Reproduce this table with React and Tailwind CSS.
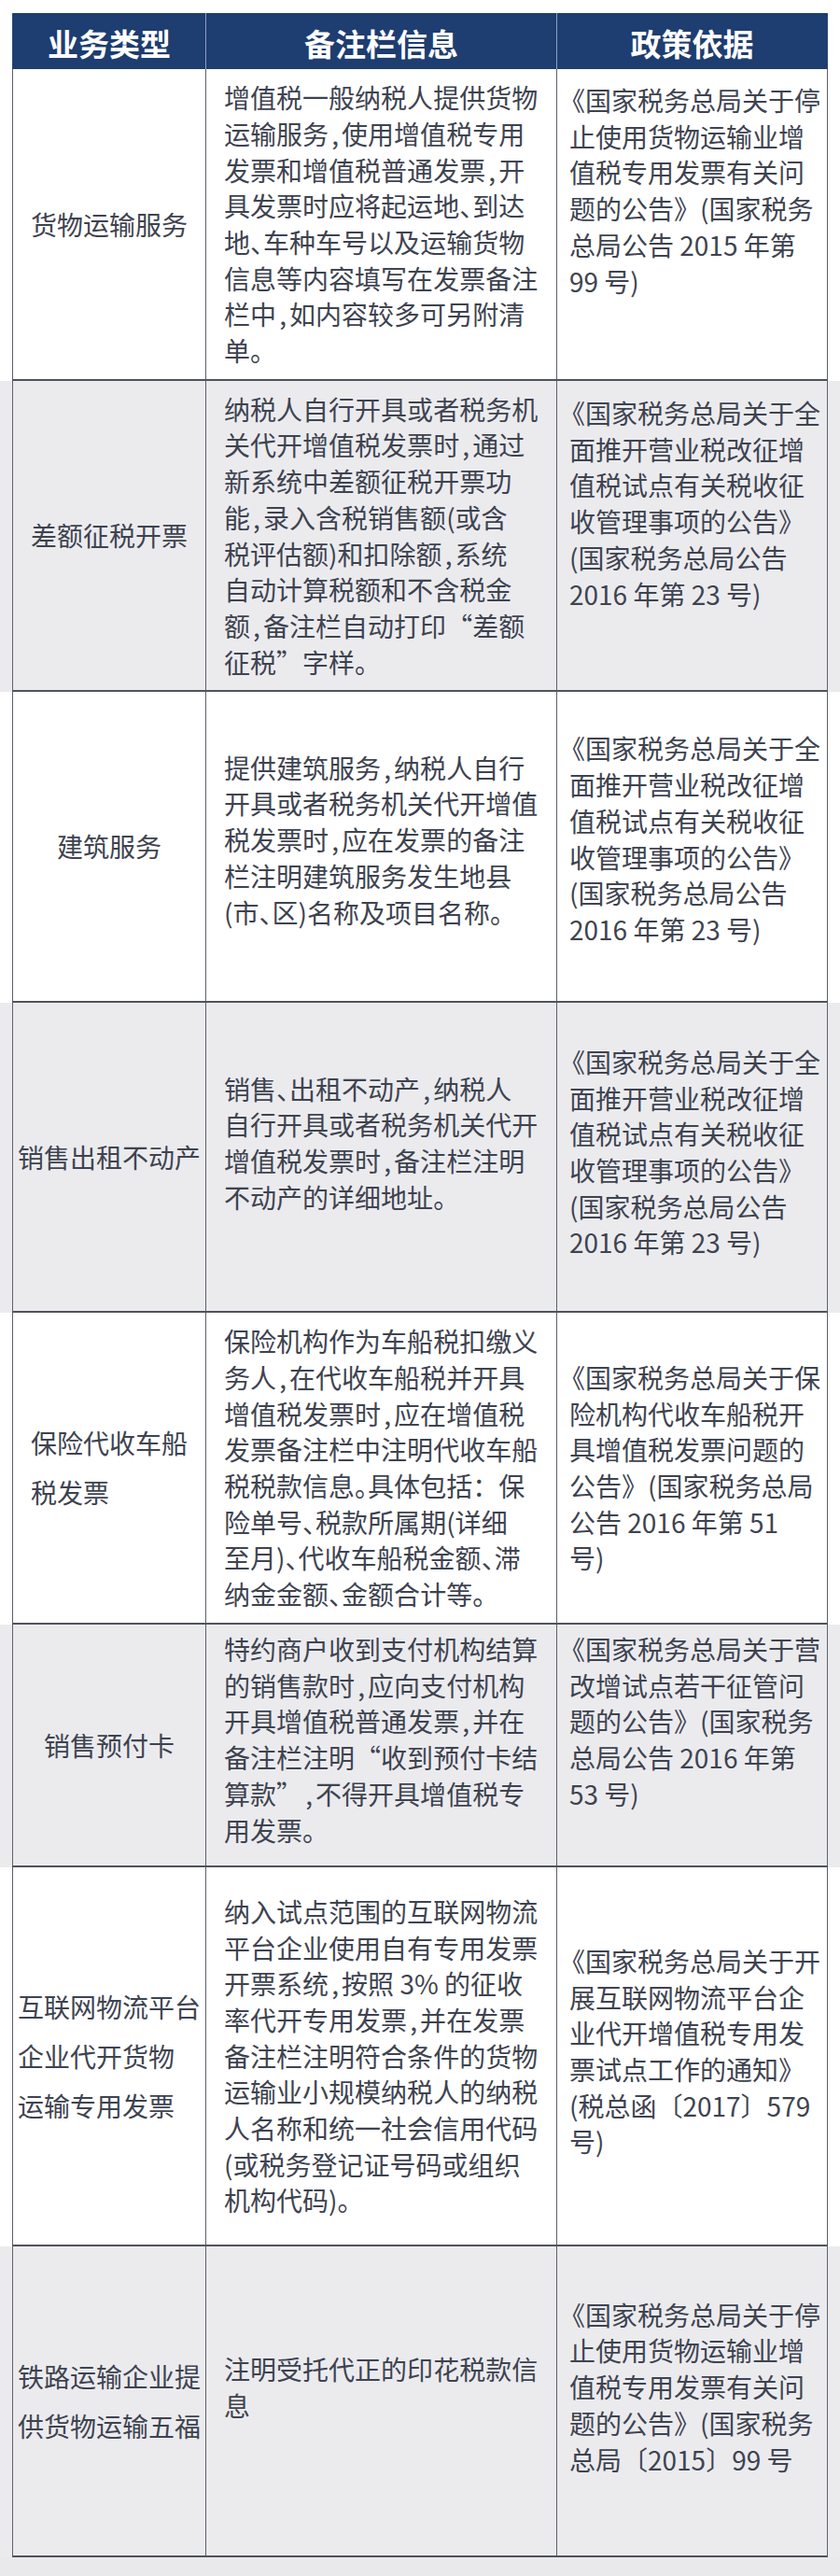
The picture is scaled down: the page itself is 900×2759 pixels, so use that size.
import React from "react";

const rows = [
  {
    bg: "bg-white",
    h: "h-[334px]",
    type: ["货物运输服务"],
    note: [
      "增值税一般纳税人提供货物",
      "运输服务，使用增值税专用",
      "发票和增值税普通发票，开",
      "具发票时应将起运地、到达",
      "地、车种车号以及运输货物",
      "信息等内容填写在发票备注",
      "栏中，如内容较多可另附清",
      "单。",
    ],
    law: [
      "《国家税务总局关于停",
      "止使用货物运输业增",
      "值税专用发票有关问",
      "题的公告》(国家税务",
      "总局公告 2015 年第",
      "99 号)",
    ],
    noteCls: "justify-center",
    lawCls: "justify-start pt-[14px]",
  },
  {
    bg: "bg-[#ebebee]",
    h: "h-[333px]",
    type: ["差额征税开票"],
    note: [
      "纳税人自行开具或者税务机",
      "关代开增值税发票时，通过",
      "新系统中差额征税开票功",
      "能，录入含税销售额(或含",
      "税评估额)和扣除额，系统",
      "自动计算税额和不含税金",
      "额，备注栏自动打印“差额",
      "征税”字样。",
    ],
    law: [
      "《国家税务总局关于全",
      "面推开营业税改征增",
      "值税试点有关税收征",
      "收管理事项的公告》",
      "(国家税务总局公告",
      "2016 年第 23 号)",
    ],
    noteCls: "justify-center",
    lawCls: "justify-start pt-[15px]",
  },
  {
    bg: "bg-white",
    h: "h-[333px]",
    type: ["建筑服务"],
    note: [
      "提供建筑服务，纳税人自行",
      "开具或者税务机关代开增值",
      "税发票时，应在发票的备注",
      "栏注明建筑服务发生地县",
      "(市、区)名称及项目名称。",
    ],
    law: [
      "《国家税务总局关于全",
      "面推开营业税改征增",
      "值税试点有关税收征",
      "收管理事项的公告》",
      "(国家税务总局公告",
      "2016 年第 23 号)",
    ],
    noteCls: "justify-center pb-[14px]",
    lawCls: "justify-center pb-[16px]",
  },
  {
    bg: "bg-[#ebebee]",
    h: "h-[332px]",
    type: ["销售出租不动产"],
    note: [
      "销售、出租不动产，纳税人",
      "自行开具或者税务机关代开",
      "增值税发票时，备注栏注明",
      "不动产的详细地址。",
    ],
    law: [
      "《国家税务总局关于全",
      "面推开营业税改征增",
      "值税试点有关税收征",
      "收管理事项的公告》",
      "(国家税务总局公告",
      "2016 年第 23 号)",
    ],
    noteCls: "justify-center pb-[30px]",
    lawCls: "justify-center pb-[10px]",
  },
  {
    bg: "bg-white",
    h: "h-[334px]",
    type: ["保险代收车船", "税发票"],
    note: [
      "保险机构作为车船税扣缴义",
      "务人，在代收车船税并开具",
      "增值税发票时，应在增值税",
      "发票备注栏中注明代收车船",
      "税税款信息。具体包括：保",
      "险单号、税款所属期(详细",
      "至月)、代收车船税金额、滞",
      "纳金金额、金额合计等。",
    ],
    law: [
      "《国家税务总局关于保",
      "险机构代收车船税开",
      "具增值税发票问题的",
      "公告》(国家税务总局",
      "公告 2016 年第 51",
      "号)",
    ],
    noteCls: "justify-center",
    lawCls: "justify-center",
  },
  {
    bg: "bg-[#ebebee]",
    h: "h-[260px]",
    type: ["销售预付卡"],
    note: [
      "特约商户收到支付机构结算",
      "的销售款时，应向支付机构",
      "开具增值税普通发票，并在",
      "备注栏注明“收到预付卡结",
      "算款”，不得开具增值税专",
      "用发票。",
    ],
    law: [
      "《国家税务总局关于营",
      "改增试点若干征管问",
      "题的公告》(国家税务",
      "总局公告 2016 年第",
      "53 号)",
    ],
    noteCls: "justify-start pt-[7px]",
    lawCls: "justify-start pt-[7px]",
  },
  {
    bg: "bg-white",
    h: "h-[406px]",
    type: ["互联网物流平台", "企业代开货物", "运输专用发票"],
    note: [
      "纳入试点范围的互联网物流",
      "平台企业使用自有专用发票",
      "开票系统，按照 3% 的征收",
      "率代开专用发票，并在发票",
      "备注栏注明符合条件的货物",
      "运输业小规模纳税人的纳税",
      "人名称和统一社会信用代码",
      "(或税务登记证号码或组织",
      "机构代码)。",
    ],
    law: [
      "《国家税务总局关于开",
      "展互联网物流平台企",
      "业代开增值税专用发",
      "票试点工作的通知》",
      "(税总函〔2017〕579",
      "号)",
    ],
    noteCls: "justify-center",
    lawCls: "justify-center pb-[10px]",
  },
  {
    bg: "bg-[#ebebee]",
    h: "h-[333px]",
    type: ["铁路运输企业提", "供货物运输五福"],
    note: ["注明受托代正的印花税款信", "息"],
    law: [
      "《国家税务总局关于停",
      "止使用货物运输业增",
      "值税专用发票有关问",
      "题的公告》(国家税务",
      "总局〔2015〕99 号",
    ],
    noteCls: "justify-center pb-[30px]",
    lawCls: "justify-center pb-[30px]",
  },
];

// the source table sets a few CJK punctuation marks at half width
const renderLine = (line) =>
  [...line].map((ch, i) => {
    if (ch === "，")
      return (
        <span key={i} className="inline-block w-[14px] text-center">
          ,
        </span>
      );
    if (ch === "、" || ch === "。")
      return (
        <span key={i} className="tracking-[-14px]">
          {ch}
        </span>
      );
    return <React.Fragment key={i}>{ch}</React.Fragment>;
  });

const HeaderRow = () => (
  <div className="bg-white px-[13px] pt-[14px]">
    <div className="grid h-[60px] grid-cols-[206px_376px_290px] border-x border-[#2a4877] bg-[#1e3d70] text-[33px] font-bold text-white">
      <div className="flex items-center justify-center pt-[5px]">业务类型</div>
      <div className="flex items-center justify-center border-l border-[#8e9fbd] pt-[5px]">
        备注栏信息
      </div>
      <div className="flex items-center justify-center border-l border-[#8e9fbd] pt-[5px]">
        政策依据
      </div>
    </div>
  </div>
);

const Row = ({ row }) => (
  <div className={`px-[13px] ${row.bg}`}>
    <div
      className={`grid grid-cols-[206px_376px_290px] border-x border-b-2 border-x-[#5b606a] border-b-[#4f535b] ${row.h}`}
    >
      {/* 业务类型 */}
      <div className="flex items-center justify-center">
        <div className="leading-[53px]">
          {row.type.map((l, i) => (
            <div key={i} className="whitespace-nowrap">
              {l}
            </div>
          ))}
        </div>
      </div>

      {/* 备注栏信息 */}
      <div
        className={`flex flex-col border-l border-[#5b606a] pl-[19px] leading-[38.7px] ${row.noteCls}`}
      >
        {row.note.map((l, i) => (
          <div key={i} className="whitespace-nowrap">
            {renderLine(l)}
          </div>
        ))}
      </div>

      {/* 政策依据 */}
      <div
        className={`flex flex-col border-l border-[#5b606a] pl-[13px] leading-[38.7px] ${row.lawCls}`}
      >
        {row.law.map((l, i) => (
          <div
            key={i}
            className={
              l.startsWith("《")
                ? "-ml-[11px] whitespace-nowrap"
                : "whitespace-nowrap"
            }
          >
            {l}
          </div>
        ))}
      </div>
    </div>
  </div>
);

export default function App() {
  return (
    <div className="w-[900px] bg-white font-['Noto_Sans_CJK_SC','Noto_Sans',sans-serif] text-[28px] text-[#3e4350]">
      <HeaderRow />
      {rows.map((row, i) => (
        <Row key={i} row={row} />
      ))}
      <div className="h-[20px] bg-[#e9e9eb]" />
    </div>
  );
}
